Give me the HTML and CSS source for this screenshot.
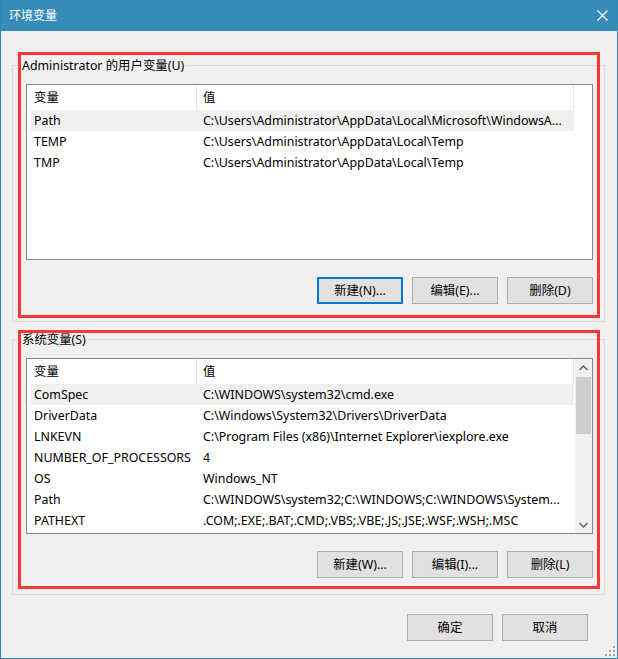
FILE: index.html
```html
<!DOCTYPE html>
<html lang="zh-CN">
<head>
<meta charset="utf-8">
<title>环境变量</title>
<link rel="stylesheet" href="styles.css">
</head>
<body>
<div class="window">
  <div class="titlebar">
    <span class="title">环境变量</span>
    <svg class="close" width="11" height="11" viewBox="0 0 11 11"><path d="M0.5 0.5 L10.5 10.5 M10.5 0.5 L0.5 10.5" stroke="#fff" stroke-width="1.1" fill="none"/></svg>
  </div>
  <div class="body">
    <div class="groupbox gb-user">
      <span class="gb-title">Administrator 的用户变量(U)</span>
      <div class="listview">
        <div class="lv-main">
          <div class="lv-header"><div class="hc c1">变量</div><div class="hc c2">值</div></div>
          <div class="row sel"><div class="cell c1">Path</div><div class="cell c2">C:\Users\Administrator\AppData\Local\Microsoft\WindowsA...</div></div>
          <div class="row"><div class="cell c1">TEMP</div><div class="cell c2">C:\Users\Administrator\AppData\Local\Temp</div></div>
          <div class="row"><div class="cell c1">TMP</div><div class="cell c2">C:\Users\Administrator\AppData\Local\Temp</div></div>
        </div>
      </div>
      <div class="btn-row">
        <button class="btn default">新建(N)...</button>
        <button class="btn">编辑(E)...</button>
        <button class="btn">删除(D)</button>
      </div>
      <div class="redbox red-user"></div>
    </div>

    <div class="groupbox gb-sys">
      <span class="gb-title">系统变量(S)</span>
      <div class="listview">
        <div class="lv-main">
          <div class="lv-header"><div class="hc c1">变量</div><div class="hc c2">值</div></div>
          <div class="row sel"><div class="cell c1">ComSpec</div><div class="cell c2">C:\WINDOWS\system32\cmd.exe</div></div>
          <div class="row"><div class="cell c1">DriverData</div><div class="cell c2">C:\Windows\System32\Drivers\DriverData</div></div>
          <div class="row"><div class="cell c1">LNKEVN</div><div class="cell c2">C:\Program Files (x86)\Internet Explorer\iexplore.exe</div></div>
          <div class="row"><div class="cell c1">NUMBER_OF_PROCESSORS</div><div class="cell c2">4</div></div>
          <div class="row"><div class="cell c1">OS</div><div class="cell c2">Windows_NT</div></div>
          <div class="row"><div class="cell c1">Path</div><div class="cell c2">C:\WINDOWS\system32;C:\WINDOWS;C:\WINDOWS\System...</div></div>
          <div class="row"><div class="cell c1">PATHEXT</div><div class="cell c2">.COM;.EXE;.BAT;.CMD;.VBS;.VBE;.JS;.JSE;.WSF;.WSH;.MSC</div></div>
        </div>
        <div class="scrollbar">
          <div class="sb-btn"><svg width="9" height="6" viewBox="0 0 9 6"><path d="M0.5 5 L4.5 1 L8.5 5" stroke="#606060" stroke-width="1.5" fill="none"/></svg></div>
          <div class="sb-track"><div class="sb-thumb"></div></div>
          <div class="sb-btn"><svg width="9" height="6" viewBox="0 0 9 6"><path d="M0.5 1 L4.5 5 L8.5 1" stroke="#606060" stroke-width="1.5" fill="none"/></svg></div>
        </div>
      </div>
      <div class="btn-row">
        <button class="btn">新建(W)...</button>
        <button class="btn">编辑(I)...</button>
        <button class="btn">删除(L)</button>
      </div>
      <div class="redbox red-sys"></div>
    </div>

    <div class="dialog-buttons">
      <button class="btn">确定</button>
      <button class="btn">取消</button>
    </div>
  </div>
  <svg class="grip" width="10" height="10" viewBox="0 0 10 10">
    <rect x="8" y="0" width="2" height="2" fill="#a0a0a0"/>
    <rect x="4" y="4" width="2" height="2" fill="#a0a0a0"/>
    <rect x="8" y="4" width="2" height="2" fill="#a0a0a0"/>
    <rect x="0" y="8" width="2" height="2" fill="#a0a0a0"/>
    <rect x="4" y="8" width="2" height="2" fill="#a0a0a0"/>
    <rect x="8" y="8" width="2" height="2" fill="#a0a0a0"/>
  </svg>
</div>
</body>
</html>
```
FILE: styles.css
```css
html, body {
  margin: 0;
  padding: 0;
  background: #f0f0f0;
}
body {
  font-family: "Noto Sans", "Noto Sans CJK SC", sans-serif;
  font-size: 12.4px;
  color: #000;
}
.window {
  width: 618px;
  height: 659px;
  box-sizing: border-box;
  border: 1px solid #2f86b4;
  border-top: none;
  background: #f0f0f0;
  display: flex;
  flex-direction: column;
  position: relative;
}
.titlebar {
  height: 31px;
  flex: none;
  background: #378bb7;
  color: #fff;
  display: flex;
  align-items: center;
  justify-content: space-between;
  padding: 0 9px 0 8px;
  font-size: 12px;
}
.title {
  line-height: 16px;
}
.close {
  display: block;
}
.body {
  padding: 34px 12px 0 11px;
  display: flex;
  flex-direction: column;
}
.groupbox {
  border: 1px solid #dcdcdc;
  padding: 0 11px 17px 13px;
  display: flex;
  flex-direction: column;
  position: relative;
}
.gb-sys {
  margin-top: 17px;
  padding-bottom: 16px;
}
.gb-title {
  align-self: flex-start;
  margin: -8px 0 0 -5px;
  padding: 0 1px;
  background: #f0f0f0;
  line-height: 16px;
  height: 16px;
  white-space: nowrap;
}
.listview {
  margin-top: 10px;
  height: 176px;
  box-sizing: border-box;
  border: 1px solid #828790;
  background: #fff;
  display: flex;
}
.lv-main {
  flex: 1;
  min-width: 0;
  display: flex;
  flex-direction: column;
}
.lv-header {
  display: flex;
  height: 25px;
  flex: none;
}
.hc {
  box-sizing: border-box;
  border-right: 1px solid #e5e5e5;
  line-height: 25px;
  white-space: nowrap;
  overflow: hidden;
}
.hc.c1 {
  width: 170px;
  padding-left: 7px;
}
.hc.c2 {
  width: 377px;
  padding-left: 6px;
}
.row {
  display: flex;
  height: 21px;
  flex: none;
  margin-left: 4px;
  width: 543px;
}
.row.sel {
  background: #f0f0f0;
}
.cell {
  box-sizing: border-box;
  line-height: 21px;
  white-space: nowrap;
  overflow: hidden;
}
.cell.c1 {
  width: 166px;
  padding-left: 3px;
}
.cell.c2 {
  width: 377px;
  padding-left: 6px;
}
.scrollbar {
  width: 17px;
  flex: none;
  background: #f0f0f0;
  display: flex;
  flex-direction: column;
}
.sb-btn {
  height: 17px;
  flex: none;
  display: flex;
  align-items: center;
  justify-content: center;
}
.sb-track {
  flex: 1;
  padding: 1px 1px 0 1px;
}
.sb-thumb {
  height: 57px;
  background: #cdcdcd;
}
.btn-row {
  margin-top: 17px;
  display: flex;
  justify-content: flex-end;
  gap: 9px;
}
.btn {
  width: 86px;
  height: 27px;
  box-sizing: border-box;
  border: 1px solid #adadad;
  background: #e1e1e1;
  font: inherit;
  color: #000;
  padding: 0;
  margin: 0;
  line-height: 16px;
}
.btn.default {
  border: 2px solid #0078d7;
}
.dialog-buttons {
  margin-top: 19px;
  display: flex;
  justify-content: flex-end;
  gap: 9px;
  padding-right: 17px;
}
.redbox {
  position: absolute;
  box-sizing: border-box;
  border: 3px solid #fb3636;
  left: 5px;
  width: 582px;
  pointer-events: none;
}
.red-user {
  top: -14px;
  height: 266px;
}
.red-sys {
  top: -10px;
  height: 259px;
}
.grip {
  position: absolute;
  right: 2px;
  bottom: 2px;
}
```
